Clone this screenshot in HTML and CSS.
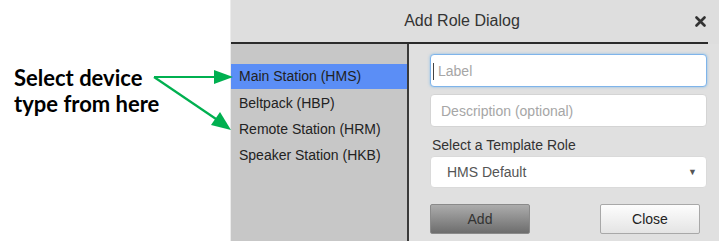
FILE: index.html
```html
<!DOCTYPE html>
<html>
<head>
<meta charset="utf-8">
<link rel="stylesheet" href="styles.css">
</head>
<body>
<div class="page">
  <div class="note">
    <p class="note-text">Select device<br>type from here</p>
  </div>
  <div class="dialog">
    <div class="dlg-head">
      <div class="dlg-title">Add Role Dialog</div>
      <div class="dlg-close" aria-label="close">
        <svg width="11" height="11" viewBox="0 0 11 11"><path d="M1.5 1.5 L9.5 9.5 M9.5 1.5 L1.5 9.5" stroke="#333" stroke-width="2.6" stroke-linecap="round"/></svg>
      </div>
    </div>
    <div class="dlg-rule"></div>
    <div class="dlg-body">
      <ul class="types">
        <li class="type selected">Main Station (HMS)</li>
        <li class="type">Beltpack (HBP)</li>
        <li class="type">Remote Station (HRM)</li>
        <li class="type">Speaker Station (HKB)</li>
      </ul>
      <div class="divider"></div>
      <div class="form">
        <div class="field focus"><span class="caret"></span><span class="ph ph-label">Label</span></div>
        <div class="field"><span class="ph">Description (optional)</span></div>
        <div class="lbl">Select a Template Role</div>
        <div class="select"><span>HMS Default</span><span class="arrow">&#9660;</span></div>
        <div class="buttons">
          <button class="btn btn-add">Add</button>
          <button class="btn btn-close">Close</button>
        </div>
      </div>
    </div>
  </div>
  <svg class="arrows" width="240" height="245" viewBox="0 0 240 245">
    <g stroke="#00b050" stroke-width="2.2" fill="none">
      <line x1="154" y1="77" x2="218" y2="77"/>
      <line x1="154" y1="77" x2="219" y2="121"/>
    </g>
    <polygon points="233,77 214,70 214,84" fill="#00b050"/>
    <polygon points="231,130 211,125 220,112" fill="#00b050"/>
  </svg>
</div>
</body>
</html>
```
FILE: styles.css
```css
html, body {
  margin: 0;
  padding: 0;
  background: #fff;
}
.page {
  position: relative;
  display: flex;
  width: 721px;
  height: 245px;
  font-family: "Liberation Sans", Arial, sans-serif;
}
.note {
  width: 230px;
  flex: none;
}
.note-text {
  margin: 0;
  padding: 65px 0 0 14px;
  font-family: Lato, "Open Sans", sans-serif;
  font-weight: 700;
  font-size: 22px;
  line-height: 26px;
  color: #000;
}
.dialog {
  width: 489px;
  height: 241px;
  flex: none;
  background: #dedede;
  border-left: 1px solid #ececec;
  box-sizing: border-box;
  display: flex;
  flex-direction: column;
}
.dlg-head {
  height: 42px;
  display: flex;
  align-items: center;
  flex: none;
}
.dlg-title {
  flex: 1;
  text-align: center;
  padding-right: 2px;
  font-size: 16px;
  color: #333;
}
.dlg-close {
  width: 11px;
  height: 11px;
  margin-right: 13px;
  display: flex;
}
.dlg-rule {
  height: 2px;
  background: #2b2b2b;
  margin-right: 11px;
  flex: none;
}
.dlg-body {
  flex: 1;
  display: flex;
}
.types {
  list-style: none;
  margin: 0;
  padding: 20px 0 0 0;
  width: 176px;
  background: #c7c7c7;
}
.type {
  height: 26px;
  line-height: 26px;
  padding-left: 8px;
  font-size: 14px;
  color: #222;
}
.type.selected {
  background: #5b8ef6;
  height: 25px;
  line-height: 25px;
  margin-bottom: 1px;
}
.divider {
  width: 2px;
  background: #3a3a3a;
}
.form {
  flex: 1;
  background: #e0e0e0;
  padding: 10px 12px 0 21px;
  display: flex;
  flex-direction: column;
}
.field {
  position: relative;
  height: 33px;
  box-sizing: border-box;
  background: #fff;
  border: 1px solid #d4d4d4;
  border-radius: 4px;
  display: flex;
  align-items: center;
  padding-left: 10px;
  margin-bottom: 7px;
}
.field.focus {
  border-color: #7fb4ea;
  box-shadow: 0 0 3px rgba(102, 175, 233, 0.7);
}
.caret {
  position: absolute;
  left: 2px;
  top: 8px;
  width: 1px;
  height: 17px;
  background: #444;
}
.ph {
  font-size: 14px;
  color: #a6a6a6;
}
.ph-label {
  margin-left: -3px;
}
.lbl {
  font-size: 14px;
  color: #333;
  margin: 2px 0 0 2px;
  height: 18px;
  line-height: 18px;
}
.select {
  margin-top: 2px;
  height: 32px;
  box-sizing: border-box;
  background: #fff;
  border: 1px solid #dadada;
  border-radius: 4px;
  display: flex;
  align-items: center;
  justify-content: space-between;
  padding: 0 9px 0 16px;
  font-size: 14px;
  color: #555;
}
.arrow {
  font-size: 9px;
  color: #555;
}
.buttons {
  margin-top: 16px;
  display: flex;
  justify-content: space-between;
  padding-right: 7px;
}
.btn {
  width: 100px;
  height: 30px;
  border-radius: 2px;
  font-family: "Liberation Sans", Arial, sans-serif;
  font-size: 14px;
  padding: 0;
}
.btn-add {
  background: linear-gradient(#acacac, #6d6d6d);
  border: 1px solid #8a8a8a;
  color: #333;
}
.btn-close {
  background: linear-gradient(#fdfdfd, #e4e4e4);
  border: 1px solid #a8a8a8;
  color: #222;
}
.arrows {
  position: absolute;
  left: 0;
  top: 0;
  pointer-events: none;
}
```
